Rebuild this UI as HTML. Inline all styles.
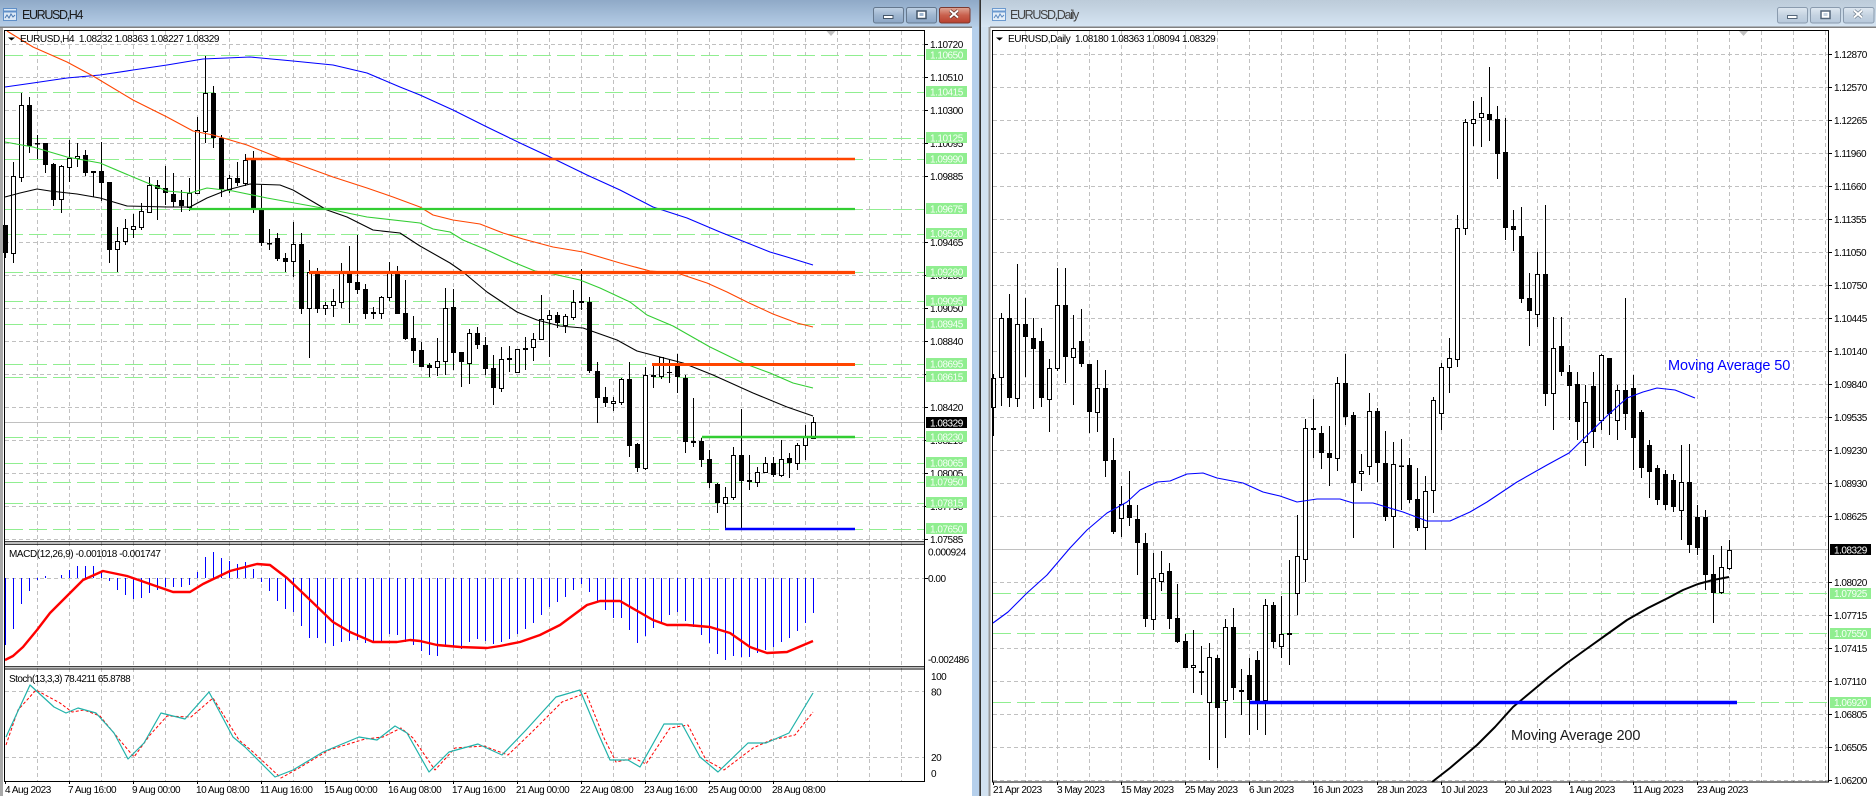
<!DOCTYPE html>
<html><head><meta charset="utf-8"><title>EURUSD</title>
<style>
html,body{margin:0;padding:0;background:#fff;width:1876px;height:796px;overflow:hidden}
svg{position:absolute;left:0;top:0;display:block}
text{font-family:"Liberation Sans",sans-serif;font-size:10px;letter-spacing:-.48px;fill:#000}
.hd{letter-spacing:-.41px}
.t{font-size:12.5px;letter-spacing:-1.35px;fill:#1a1a1a}
.g{fill:#f6fff6}
.grid{stroke:#c0c0c0;stroke-width:1;stroke-dasharray:4 3;fill:none}
.lv{stroke:#90ee90;stroke-width:1;stroke-dasharray:18 6;fill:none}
.w{stroke:#000;stroke-width:1;fill:none}
.f{stroke:#000;stroke-width:5;fill:none}
.h{stroke:#000;stroke-width:1;fill:#fff}
.m{fill:none;stroke-width:1.1;stroke-linejoin:round}
</style></head><body>
<svg width="1876" height="796" viewBox="0 0 1876 796" xmlns="http://www.w3.org/2000/svg">
<defs>
<linearGradient id="ta" x1="0" y1="0" x2="0" y2="1"><stop offset="0" stop-color="#8fa9c7"/><stop offset="1" stop-color="#b6cee7"/></linearGradient>
<linearGradient id="tb" x1="0" y1="0" x2="0" y2="1"><stop offset="0" stop-color="#bccbd9"/><stop offset="1" stop-color="#d6e5f3"/></linearGradient>
<linearGradient id="ba" x1="0" y1="0" x2="0" y2="1"><stop offset="0" stop-color="#c2d3e6"/><stop offset=".5" stop-color="#9fb6d0"/><stop offset="1" stop-color="#8ba6c6"/></linearGradient>
<linearGradient id="bb" x1="0" y1="0" x2="0" y2="1"><stop offset="0" stop-color="#dfe8f1"/><stop offset=".5" stop-color="#c5d3e1"/><stop offset="1" stop-color="#b6c8db"/></linearGradient>
<linearGradient id="bc" x1="0" y1="0" x2="0" y2="1"><stop offset="0" stop-color="#dfa898"/><stop offset=".5" stop-color="#c9604d"/><stop offset="1" stop-color="#b8402e"/></linearGradient>
</defs>

<!-- window chrome -->
<rect x="0" y="0" width="980" height="796" fill="#fff"/>
<rect x="0" y="0" width="979" height="27" fill="url(#ta)"/>
<rect x="0" y="27" width="3" height="769" fill="#a8a8a8"/>
<rect x="972" y="27" width="7" height="769" fill="#b6d0ec"/>
<rect x="0" y="26.5" width="972" height="1.5" fill="#808080"/>
<rect x="979.4" y="0" width="1.4" height="796" fill="#000"/>
<rect x="981" y="0" width="895" height="27" fill="url(#tb)"/>
<rect x="981" y="27" width="8" height="769" fill="#d2e2f1"/>
<rect x="988.5" y="27" width="2" height="769" fill="#9a9a9a"/>
<rect x="990" y="26.5" width="886" height="1.5" fill="#808080"/>

<!-- title icons -->
<g fill="none">
<rect x="3.5" y="8.5" width="13" height="12" fill="#dbe8f6" stroke="#5f8fc8"/><path d="M3.5 11.5h13" stroke="#5f8fc8" stroke-width="2"/><path d="M5 18l2-3 2 3 2-4 2 3 2-2" stroke="#4a78b0"/>
<rect x="992.5" y="8.5" width="13" height="12" fill="#e4eef8" stroke="#6c9acf"/><path d="M992.5 11.5h13" stroke="#6c9acf" stroke-width="2"/><path d="M994 18l2-3 2 3 2-4 2 3 2-2" stroke="#5a88bf"/>
</g>
<text class="t" x="22" y="19">EURUSD,H4</text>
<text class="t" x="1010" y="19" style="fill:#444">EURUSD,Daily</text>

<!-- buttons -->
<rect x="873.5" y="7.5" width="30" height="15.5" rx="2" fill="url(#ba)" stroke="#65788e"/>
<rect x="883.5" y="15.5" width="9.5" height="3" fill="#fff" stroke="#44566a"/>
<rect x="906.5" y="7.5" width="30" height="15.5" rx="2" fill="url(#ba)" stroke="#65788e"/>
<rect x="917" y="11" width="9" height="7.5" fill="#fff" stroke="#44566a" stroke-width="1.5"/><rect x="919.5" y="13" width="4" height="3" fill="#9fb6d0"/>
<rect x="939.5" y="7.5" width="30.5" height="15.5" rx="2" fill="url(#bc)" stroke="#7c3a30"/>
<path d="M950 10.5l8 7M958 10.5l-8 7" stroke="#5a2a24" stroke-width="3.4"/><path d="M950 10.5l8 7M958 10.5l-8 7" stroke="#fff" stroke-width="2"/>
<rect x="1777.5" y="7.5" width="30" height="15.5" rx="2" fill="url(#bb)" stroke="#8a9bae"/>
<rect x="1787.5" y="15.5" width="9.5" height="3" fill="#fff" stroke="#55677b"/>
<rect x="1810.5" y="7.5" width="30" height="15.5" rx="2" fill="url(#bb)" stroke="#8a9bae"/>
<rect x="1821" y="11" width="9" height="7.5" fill="#fff" stroke="#55677b" stroke-width="1.5"/><rect x="1823.5" y="13" width="4" height="3" fill="#c5d3e1"/>
<rect x="1843.5" y="7.5" width="30.5" height="15.5" rx="2" fill="url(#bb)" stroke="#8a9bae"/>
<path d="M1854 10.5l8 7M1862 10.5l-8 7" stroke="#6b7a8a" stroke-width="3.4"/><path d="M1854 10.5l8 7M1862 10.5l-8 7" stroke="#fff" stroke-width="2"/>

<!-- ================= H4 CHART ================= -->
<path class="grid" d="M5 44.5H924M5 77.5H924M5 110.5H924M5 143.5H924M5 176.5H924M5 209.5H924M5 242.5H924M5 275.5H924M5 308.5H924M5 341.5H924M5 374.5H924M5 407.5H924M5 440.5H924M5 473.5H924M5 506.5H924M5 539.5H924"/>
<path class="grid" d="M37.5 31V781M69.5 31V781M101.5 31V781M133.5 31V781M165.5 31V781M197.5 31V781M229.5 31V781M261.5 31V781M293.5 31V781M325.5 31V781M357.5 31V781M389.5 31V781M421.5 31V781M453.5 31V781M485.5 31V781M517.5 31V781M549.5 31V781M581.5 31V781M613.5 31V781M645.5 31V781M677.5 31V781M709.5 31V781M741.5 31V781M773.5 31V781M805.5 31V781M837.5 31V781M869.5 31V781M901.5 31V781"/>
<path d="M5 422.5H924" stroke="#c0c0c0"/>
<path class="lv" d="M5 55.5H924M5 92.5H924M5 138.5H924M5 159.5H924M5 209.5H924M5 234.5H924M5 272.5H924M5 301.5H924M5 324.5H924M5 364.5H924M5 377.5H924M5 437.5H924M5 463.5H924M5 482.5H924M5 503.5H924M5 529.5H924"/>

<path class="w" d="M5.5 225V258M13.5 162V263M21.5 93V182M29.5 97V153M37.5 135V159M45.5 143V173M53.5 163V206M61.5 165V213M69.5 140V182M77.5 143V167M85.5 150V176M93.5 171V197M101.5 142V201M109.5 182V263M117.5 227V272M125.5 219V245M133.5 214V238M141.5 203V230M149.5 177V212M157.5 180V220M165.5 166V205M173.5 173V207M181.5 190V212M189.5 178V211M197.5 117V193M205.5 56V143M213.5 86V148M221.5 135V197M229.5 175V193M237.5 162V186M245.5 154V186M253.5 151V213M261.5 185V246M269.5 229V250M277.5 233V261M285.5 253V272M293.5 222V277M301.5 233V314M309.5 260V358M317.5 268V313M325.5 302V315M333.5 289V317M341.5 263V308M349.5 246V323M357.5 235V294M365.5 284V319M373.5 307V319M381.5 296V319M389.5 262V301M397.5 266V314M405.5 280V340M413.5 316V363M421.5 342V367M429.5 363V377M437.5 338V376M445.5 288V375M453.5 289V370M461.5 352V387M469.5 329V384M477.5 327V349M485.5 337V375M493.5 355V405M501.5 347V392M509.5 346V372M517.5 349V373M525.5 337V370M533.5 333V361M541.5 295V339M549.5 310V357M557.5 312V328M565.5 314V333M573.5 290V320M581.5 269V310M589.5 297V373M597.5 362V423M605.5 387V407M613.5 397V411M621.5 378V405M629.5 362V457M637.5 443V472M645.5 367V470M653.5 365V388M661.5 357V379M669.5 360V383M677.5 354V393M685.5 375V453M693.5 398V447M701.5 438V467M709.5 450V488M717.5 483V513M725.5 487V529M733.5 447V500M741.5 409V529M749.5 455V490M757.5 467V487M765.5 457V472M773.5 457V477M781.5 440V477M789.5 453V478M797.5 443V470M805.5 425V460M813.5 417V439"/>
<path class="h" d="M11.5 176.5h4V253.5h-4zM19.5 105.5h4V177.5h-4zM59.5 166.5h4V199.5h-4zM67.5 158.5h4V167.5h-4zM75.5 156.5h4V158.5h-4zM115.5 241.5h4V249.5h-4zM123.5 228.5h4V241.5h-4zM131.5 226.5h4V229.5h-4zM139.5 211.5h4V227.5h-4zM147.5 185.5h4V212.5h-4zM187.5 193.5h4V207.5h-4zM195.5 130.5h4V193.5h-4zM203.5 93.5h4V131.5h-4zM227.5 178.5h4V189.5h-4zM243.5 160.5h4V183.5h-4zM291.5 244.5h4V261.5h-4zM307.5 272.5h4V308.5h-4zM323.5 305.5h4V308.5h-4zM331.5 301.5h4V305.5h-4zM339.5 273.5h4V302.5h-4zM379.5 297.5h4V313.5h-4zM387.5 272.5h4V297.5h-4zM435.5 361.5h4V367.5h-4zM443.5 308.5h4V361.5h-4zM467.5 333.5h4V363.5h-4zM499.5 359.5h4V388.5h-4zM515.5 349.5h4V372.5h-4zM523.5 348.5h4V349.5h-4zM531.5 339.5h4V347.5h-4zM539.5 319.5h4V339.5h-4zM547.5 315.5h4V319.5h-4zM563.5 316.5h4V325.5h-4zM571.5 302.5h4V317.5h-4zM611.5 401.5h4V403.5h-4zM619.5 379.5h4V402.5h-4zM643.5 375.5h4V468.5h-4zM659.5 357.5h4V376.5h-4zM723.5 497.5h4V503.5h-4zM731.5 455.5h4V497.5h-4zM755.5 472.5h4V482.5h-4zM763.5 463.5h4V472.5h-4zM779.5 459.5h4V475.5h-4zM795.5 445.5h4V463.5h-4zM803.5 437.5h4V445.5h-4zM811.5 422.5h4V438.5h-4z"/>
<path class="f" d="M5.5 225V253M29.5 105V146M37.5 143V144.5M45.5 143V165M53.5 164V200M85.5 155V173M93.5 171V173M101.5 171V183M109.5 182V250M157.5 185V189M165.5 188V193M173.5 194V202M181.5 200V206M213.5 93V138M221.5 138V189M237.5 178V183M253.5 158V208M261.5 209V243M269.5 243V244.5M277.5 238V259M285.5 258V262M301.5 244V309M317.5 272V309M349.5 273V283M357.5 282V290M365.5 289V314M373.5 312V314M397.5 272V314M405.5 313V339M413.5 338V351M421.5 350V367M429.5 365V368M453.5 307V353M461.5 352V362M477.5 333V345M485.5 345V369M493.5 368V388M509.5 358V360M557.5 315V323M581.5 301V303M589.5 302V371M597.5 371V398M605.5 397V403M629.5 379V446M637.5 444V468M653.5 375V377M669.5 372V373M677.5 363V377M685.5 378V442M693.5 441V443M701.5 441V460M709.5 459V483M717.5 484V503M741.5 455V481M749.5 480V482M773.5 463V475M789.5 458V463"/>

<polyline class="m" stroke="#0000ff" points="5,87 33,83 67,78 100,75 133,70 167,65 203,59 250,57 293,61 333,65 367,73 400,87 420,95 453,110 487,127 520,143 550,157 587,175 620,190 653,207 687,218 720,232 740,240 770,252 787,257 813,265"/>
<polyline class="m" stroke="#ff4500" points="7,31 33,47 67,62 93,76 133,100 167,117 193,131 213,135 247,145 277,157 300,165 333,177 367,188 393,197 420,207 433,215 453,220 480,224 503,233 523,239 553,247 583,252 620,263 650,271 677,273 707,283 727,292 747,302 773,314 797,323 813,327"/>
<polyline class="m" stroke="#32cd32" points="5,142 33,147 67,157 100,163 133,177 167,191 190,193 207,188 233,191 267,198 300,204 333,210 367,217 420,223 433,229 450,232 463,240 487,250 513,262 535,271 553,274 580,280 600,288 630,302 647,315 673,326 710,347 743,363 770,373 793,383 813,388"/>
<polyline class="m" stroke="#000" points="5,197 20,193 37,189 50,191 77,194 100,198 127,206 167,207 190,207 207,198 227,190 250,184 280,185 293,190 327,210 347,217 373,230 400,233 420,246 450,263 463,272 487,292 517,312 537,320 560,326 583,328 617,340 637,351 683,363 713,375 753,393 787,407 813,416"/>

<path d="M246 159H855" stroke="#ff4500" stroke-width="2.6"/>
<path d="M309 272.5H855" stroke="#ff4500" stroke-width="3.2"/>
<path d="M652 364.5H855" stroke="#ff4500" stroke-width="3"/>
<path d="M189 209H855" stroke="#32cd32" stroke-width="2.2"/>
<path d="M702 437H855" stroke="#32cd32" stroke-width="2.6"/>
<path d="M725 529H855" stroke="#0000ff" stroke-width="2.4"/>

<!-- MACD -->
<path class="grid" d="M5 578.5H924"/>
<path d="M5.5 578V645M13.5 578V629M21.5 578V604M29.5 578V591M37.5 578V580M45.5 578V576M61.5 578V575M69.5 578V570M77.5 578V566M85.5 578V566M93.5 578V566M101.5 578V572M109.5 578V581M117.5 578V590M125.5 578V595M133.5 578V599M141.5 578V598M149.5 578V593M157.5 578V590M165.5 578V587M173.5 578V587M181.5 578V587M189.5 578V585M197.5 578V572M205.5 578V557M213.5 578V552M221.5 578V558M229.5 578V561M237.5 578V564M245.5 578V562M253.5 578V569M261.5 578V582M269.5 578V591M277.5 578V601M285.5 578V609M293.5 578V612M301.5 578V626M309.5 578V638M317.5 578V638M325.5 578V643M333.5 578V646M341.5 578V642M349.5 578V641M357.5 578V640M365.5 578V643M373.5 578V643M381.5 578V643M389.5 578V634M397.5 578V635M405.5 578V642M413.5 578V645M421.5 578V651M429.5 578V655M437.5 578V656M445.5 578V647M453.5 578V647M461.5 578V649M469.5 578V642M477.5 578V639M485.5 578V641M493.5 578V644M501.5 578V642M509.5 578V639M517.5 578V634M525.5 578V629M533.5 578V623M541.5 578V615M549.5 578V607M557.5 578V602M565.5 578V597M573.5 578V590M581.5 578V584M589.5 578V592M597.5 578V602M605.5 578V610M613.5 578V618M621.5 578V618M629.5 578V630M637.5 578V643M645.5 578V636M653.5 578V628M661.5 578V623M669.5 578V615M677.5 578V612M685.5 578V621M693.5 578V627M701.5 578V635M709.5 578V643M717.5 578V654M725.5 578V660M733.5 578V656M741.5 578V657M749.5 578V657M757.5 578V653M765.5 578V650M773.5 578V647M781.5 578V642M789.5 578V638M797.5 578V631M805.5 578V623M813.5 578V613" stroke="#0000ff" fill="none"/>
<polyline fill="none" stroke="#ff0000" stroke-width="2.4" stroke-linejoin="round" points="5,660 13,656 23,647 37,630 50,613 70,593 83,580 103,571 127,576 150,584 173,592 190,592 203,584 230,571 257,564 270,565 287,578 307,597 333,622 350,632 373,642 397,642 410,640 420,641 437,645 460,647 487,648 500,646 520,642 540,635 560,625 587,605 600,601 620,601 653,620 667,625 687,625 710,627 730,633 750,647 767,653 787,652 813,641"/>

<!-- Stochastic -->
<path class="grid" d="M5 691.5H924M5 757.5H924"/>
<polyline fill="none" stroke="#ff0000" stroke-width="1" stroke-dasharray="3 2" stroke-linejoin="round" points="6,745 18,710 36,690 60,703 72,712 84,710 100,716 118,738 134,757 150,735 167,716 191,717 213,698 239,740 253,752 281,778 299,768 329,750 365,739 383,737 401,728 413,738 435,770 455,748 484,746 508,755 532,732 562,702 586,693 604,738 616,762 634,758 646,764 670,728 688,725 706,760 724,770 753,748 771,740 795,735 813,712"/>
<polyline fill="none" stroke="#20b2aa" stroke-width="1.2" stroke-linejoin="round" points="6,737 30,685 54,707 66,713 78,708 96,713 114,733 128,759 144,743 161,713 185,719 209,692 233,737 245,747 275,777 293,770 323,752 359,737 377,740 395,726 407,733 429,772 449,752 478,744 502,755 526,730 556,697 580,690 598,733 610,760 628,760 640,767 664,724 682,724 700,757 718,772 748,743 766,743 789,733 813,693"/>

<!-- frames H4 -->
<rect x="4.5" y="30.5" width="920" height="751" fill="none" stroke="#000"/>
<path d="M4 541.8H925M4 544.3H925M4 666.7H925M4 669H925" stroke="#000" fill="none"/>
<path d="M826.5 31h9l-4.5 5z" fill="#c0c0c0"/>
<path d="M8 37.5h7l-3.5 3z" fill="#000"/>
<text class="hd" x="20" y="42">EURUSD,H4&#160;&#160;1.08232 1.08363 1.08227 1.08329</text>
<text class="hd" x="9" y="557">MACD(12,26,9) -0.001018 -0.001747</text>
<text x="9" y="682" style="letter-spacing:-.55px">Stoch(13,3,3) 78.4211 65.8788</text>

<!-- H4 axis -->
<path d="M925 44.5h3M925 77.5h3M925 110.5h3M925 143.5h3M925 176.5h3M925 242.5h3M925 275.5h3M925 308.5h3M925 341.5h3M925 374.5h3M925 407.5h3M925 440.5h3M925 473.5h3M925 506.5h3M925 539.5h3M925 578.5h3" stroke="#000"/>
<text x="930" y="48">1.10720</text><text x="930" y="81">1.10510</text><text x="930" y="114">1.10300</text><text x="930" y="147">1.10095</text><text x="930" y="180">1.09885</text><text x="930" y="246">1.09465</text><text x="930" y="279">1.09255</text><text x="930" y="312">1.09050</text><text x="930" y="345">1.08840</text><text x="930" y="411">1.08420</text><text x="930" y="444">1.08210</text><text x="930" y="477">1.08005</text><text x="930" y="510">1.07795</text><text x="930" y="543">1.07585</text>
<g fill="#90ee90"><rect x="926" y="49" width="41" height="11"/><rect x="926" y="86" width="41" height="11"/><rect x="926" y="132" width="41" height="11"/><rect x="926" y="153" width="41" height="11"/><rect x="926" y="203" width="41" height="11"/><rect x="926" y="228" width="41" height="11"/><rect x="926" y="266" width="41" height="11"/><rect x="926" y="295" width="41" height="11"/><rect x="926" y="318" width="41" height="11"/><rect x="926" y="358" width="41" height="11"/><rect x="926" y="371" width="41" height="11"/><rect x="926" y="431" width="41" height="11"/><rect x="926" y="457" width="41" height="11"/><rect x="926" y="476" width="41" height="11"/><rect x="926" y="497" width="41" height="11"/><rect x="926" y="523" width="41" height="11"/></g>
<rect x="926" y="417" width="41" height="11" fill="#000"/>
<g class="g"><text class="g" x="930" y="58.5">1.10650</text><text class="g" x="930" y="95.5">1.10415</text><text class="g" x="930" y="141.5">1.10125</text><text class="g" x="930" y="162.5">1.09990</text><text class="g" x="930" y="212.5">1.09675</text><text class="g" x="930" y="237">1.09520</text><text class="g" x="930" y="275.5">1.09280</text><text class="g" x="930" y="304.5">1.09095</text><text class="g" x="930" y="327.5">1.08945</text><text class="g" x="930" y="367.5">1.08695</text><text class="g" x="930" y="380.5">1.08615</text><text class="g" x="930" y="440.5">1.08230</text><text class="g" x="930" y="466.5">1.08065</text><text class="g" x="930" y="485.5">1.07950</text><text class="g" x="930" y="506.5">1.07815</text><text class="g" x="930" y="532.5">1.07650</text></g>
<text x="930" y="426.5" style="fill:#fff">1.08329</text>
<text x="928" y="555.5">0.000924</text><text x="928" y="582">0.00</text><text x="928" y="663">-0.002486</text>
<text x="931" y="680">100</text><text x="931" y="695.5">80</text><text x="931" y="761">20</text><text x="931" y="777">0</text>

<!-- H4 dates -->
<path d="M5.5 781v3M69.5 781v3M133.5 781v3M197.5 781v3M261.5 781v3M325.5 781v3M389.5 781v3M453.5 781v3M517.5 781v3M581.5 781v3M645.5 781v3M709.5 781v3M773.5 781v3" stroke="#000"/>
<text x="5" y="793">4 Aug 2023</text><text x="68" y="793">7 Aug 16:00</text><text x="132" y="793">9 Aug 00:00</text><text x="196" y="793">10 Aug 08:00</text><text x="260" y="793">11 Aug 16:00</text><text x="324" y="793">15 Aug 00:00</text><text x="388" y="793">16 Aug 08:00</text><text x="452" y="793">17 Aug 16:00</text><text x="516" y="793">21 Aug 00:00</text><text x="580" y="793">22 Aug 08:00</text><text x="644" y="793">23 Aug 16:00</text><text x="708" y="793">25 Aug 00:00</text><text x="772" y="793">28 Aug 08:00</text>

<!-- ================= DAILY CHART ================= -->
<path class="grid" d="M993 54.5H1828M993 87.5H1828M993 120.5H1828M993 153.5H1828M993 186.5H1828M993 219.5H1828M993 252.5H1828M993 285.5H1828M993 318.5H1828M993 351.5H1828M993 384.5H1828M993 417.5H1828M993 450.5H1828M993 483.5H1828M993 516.5H1828M993 582.5H1828M993 615.5H1828M993 648.5H1828M993 681.5H1828M993 714.5H1828M993 747.5H1828M993 780.5H1828"/>
<path class="grid" d="M1025.5 31V782M1057.5 31V782M1089.5 31V782M1121.5 31V782M1153.5 31V782M1185.5 31V782M1217.5 31V782M1249.5 31V782M1281.5 31V782M1313.5 31V782M1345.5 31V782M1377.5 31V782M1409.5 31V782M1441.5 31V782M1473.5 31V782M1505.5 31V782M1537.5 31V782M1569.5 31V782M1601.5 31V782M1633.5 31V782M1665.5 31V782M1697.5 31V782M1729.5 31V782M1761.5 31V782M1793.5 31V782M1825.5 31V782"/>
<path d="M993 549.5H1828" stroke="#c0c0c0"/>
<path class="lv" d="M993 593.5H1828M993 633.5H1828M993 702.5H1828"/>

<path class="w" d="M993.5 374V436M1001.5 313V406M1009.5 294V407M1017.5 264V407M1025.5 298V377M1033.5 318V409M1041.5 328V407M1049.5 359V432M1057.5 268V371M1065.5 268V383M1073.5 315V405M1081.5 309V367M1089.5 364V433M1097.5 360V432M1105.5 370V477M1113.5 438V534M1121.5 486V537M1129.5 471V526M1137.5 505V575M1145.5 533V627M1153.5 553V630M1161.5 551V591M1169.5 563V629M1177.5 584V643M1185.5 634V668M1193.5 630V693M1201.5 646V695M1209.5 643V760M1217.5 655V768M1225.5 619V738M1233.5 608V700M1241.5 669V715M1249.5 658V735M1257.5 651V730M1265.5 599V735M1273.5 602V648M1281.5 596V658M1289.5 560V665M1297.5 515V615M1305.5 419V582M1313.5 399V458M1321.5 426V469M1329.5 426V486M1337.5 377V471M1345.5 354V425M1353.5 412V538M1361.5 454V491M1369.5 393V475M1377.5 408V482M1385.5 431V521M1393.5 442V548M1401.5 439V510M1409.5 458V503M1417.5 468V531M1425.5 476V550M1433.5 397V513M1441.5 363V430M1449.5 338V393M1457.5 215V367M1465.5 119V235M1473.5 101V146M1481.5 97V147M1489.5 67V141M1497.5 106V179M1505.5 118V240M1513.5 210V251M1521.5 207V303M1529.5 273V346M1537.5 252V327M1545.5 205V406M1553.5 317V430M1561.5 317V376M1569.5 365V420M1577.5 372V440M1585.5 385V466M1593.5 372V448M1601.5 354V430M1609.5 358V435M1617.5 385V440M1625.5 298V430M1633.5 375V470M1641.5 410V478M1649.5 440V498M1657.5 465V505M1665.5 470V510M1673.5 474V512M1681.5 445V540M1689.5 444V553M1697.5 505V555M1705.5 510V590M1713.5 555V623M1721.5 546V594M1729.5 540V570"/>
<path class="h" d="M991.5 378.5h4V407.5h-4zM999.5 318.5h4V377.5h-4zM1015.5 324.5h4V398.5h-4zM1047.5 368.5h4V399.5h-4zM1055.5 305.5h4V368.5h-4zM1071.5 348.5h4V357.5h-4zM1095.5 388.5h4V412.5h-4zM1119.5 504.5h4V518.5h-4zM1151.5 578.5h4V619.5h-4zM1159.5 573.5h4V581.5h-4zM1191.5 665.5h4V667.5h-4zM1207.5 657.5h4V702.5h-4zM1223.5 627.5h4V700.5h-4zM1263.5 605.5h4V700.5h-4zM1279.5 634.5h4V646.5h-4zM1295.5 556.5h4V593.5h-4zM1303.5 428.5h4V559.5h-4zM1335.5 383.5h4V458.5h-4zM1359.5 471.5h4V473.5h-4zM1367.5 411.5h4V466.5h-4zM1391.5 464.5h4V516.5h-4zM1423.5 491.5h4V527.5h-4zM1431.5 400.5h4V490.5h-4zM1439.5 367.5h4V413.5h-4zM1447.5 358.5h4V367.5h-4zM1455.5 228.5h4V359.5h-4zM1463.5 122.5h4V228.5h-4zM1471.5 119.5h4V123.5h-4zM1479.5 113.5h4V117.5h-4zM1535.5 274.5h4V314.5h-4zM1551.5 348.5h4V393.5h-4zM1583.5 402.5h4V442.5h-4zM1599.5 355.5h4V420.5h-4zM1615.5 390.5h4V420.5h-4zM1679.5 482.5h4V510.5h-4zM1719.5 567.5h4V592.5h-4zM1727.5 550.5h4V568.5h-4z"/>
<path class="f" d="M1009.5 318V398M1025.5 324V337M1033.5 338V349M1041.5 341V398M1065.5 305V357M1081.5 341V364M1089.5 364V412M1105.5 388V461M1113.5 460V532M1129.5 505V518M1137.5 519V543M1145.5 543V619M1169.5 571V619M1177.5 618V642M1185.5 641V668M1201.5 671V673M1217.5 658V708M1233.5 627V688M1241.5 690V692M1249.5 675V700M1257.5 660V702M1273.5 605V642M1289.5 633V635M1313.5 428V430M1321.5 433V453M1329.5 453V458M1345.5 383V417M1353.5 415V483M1377.5 411V463M1385.5 463V517M1401.5 465.5V467M1409.5 465V500M1417.5 499V528M1489.5 114V120M1497.5 119V154M1505.5 152V228M1513.5 226V230M1521.5 236V299M1529.5 298V311M1545.5 274V394M1561.5 346V372M1569.5 372V386M1577.5 384V422M1593.5 386V432M1609.5 358V414M1625.5 390V414M1633.5 388V438M1641.5 412V468M1649.5 445V472M1657.5 468V500M1665.5 474V505M1673.5 480V507M1689.5 482V545M1697.5 517V548M1705.5 517V575M1713.5 574V593"/>

<polyline class="m" stroke="#0000ff" stroke-width="1.2" points="993,623 1008,612 1027,593 1047,575 1070,548 1087,530 1107,513 1127,502 1140,490 1157,482 1170,481 1187,474 1203,473 1217,478 1243,483 1263,492 1280,496 1297,502 1317,499 1340,499 1353,503 1373,503 1403,512 1427,521 1450,521 1470,512 1487,502 1517,482 1547,465 1569,453 1609,414 1627,398 1643,392 1657,388 1675,390 1695,398"/>
<polyline fill="none" stroke="#000" stroke-width="2" stroke-linejoin="round" points="1432,782 1450,768 1477,745 1495,727 1513,707 1531,692 1549,677 1567,663 1585,650 1606,635 1627,620 1648,608 1668,598 1683,590 1698,584 1713,580 1729,577"/>
<path d="M1250 702.5H1737" stroke="#0000ff" stroke-width="3.6"/>

<rect x="992.5" y="30.5" width="836" height="751.5" fill="none" stroke="#000"/>
<path d="M1739 31h9l-4.5 5z" fill="#c0c0c0"/>
<path d="M996 37.5h7l-3.5 3z" fill="#000"/>
<text class="hd" x="1008" y="42">EURUSD,Daily&#160;&#160;1.08180 1.08363 1.08094 1.08329</text>

<text x="1668" y="370" style="font-size:14.5px;letter-spacing:-.1px;fill:#0000ff">Moving Average 50</text>
<text x="1511" y="740" style="font-size:14.5px;letter-spacing:-.15px;fill:#1a1a1a">Moving Average 200</text>

<!-- Daily axis -->
<path d="M1829 54.5h3M1829 87.5h3M1829 120.5h3M1829 153.5h3M1829 186.5h3M1829 219.5h3M1829 252.5h3M1829 285.5h3M1829 318.5h3M1829 351.5h3M1829 384.5h3M1829 417.5h3M1829 450.5h3M1829 483.5h3M1829 516.5h3M1829 582.5h3M1829 615.5h3M1829 648.5h3M1829 681.5h3M1829 714.5h3M1829 747.5h3M1829 780.5h3" stroke="#000"/>
<text x="1834" y="58">1.12870</text><text x="1834" y="91">1.12570</text><text x="1834" y="124">1.12265</text><text x="1834" y="157">1.11960</text><text x="1834" y="190">1.11660</text><text x="1834" y="223">1.11355</text><text x="1834" y="256">1.11050</text><text x="1834" y="289">1.10750</text><text x="1834" y="322">1.10445</text><text x="1834" y="355">1.10140</text><text x="1834" y="388">1.09840</text><text x="1834" y="421">1.09535</text><text x="1834" y="454">1.09230</text><text x="1834" y="487">1.08930</text><text x="1834" y="520">1.08625</text><text x="1834" y="586">1.08020</text><text x="1834" y="619">1.07715</text><text x="1834" y="652">1.07415</text><text x="1834" y="685">1.07110</text><text x="1834" y="718">1.06805</text><text x="1834" y="751">1.06505</text><text x="1834" y="784">1.06200</text>
<rect x="1830" y="544" width="41" height="11" fill="#000"/><text x="1834" y="553.5" style="fill:#fff">1.08329</text>
<g fill="#90ee90"><rect x="1830" y="588" width="41" height="11"/><rect x="1830" y="628" width="41" height="11"/><rect x="1830" y="697" width="41" height="11"/></g>
<text class="g" x="1834" y="597">1.07925</text><text class="g" x="1834" y="637">1.07550</text><text class="g" x="1834" y="706">1.06920</text>

<!-- Daily dates -->
<path d="M993.5 782v3M1057.5 782v3M1121.5 782v3M1185.5 782v3M1249.5 782v3M1313.5 782v3M1377.5 782v3M1441.5 782v3M1505.5 782v3M1569.5 782v3M1633.5 782v3M1697.5 782v3" stroke="#000"/>
<text x="993" y="793">21 Apr 2023</text><text x="1057" y="793">3 May 2023</text><text x="1121" y="793">15 May 2023</text><text x="1185" y="793">25 May 2023</text><text x="1249" y="793">6 Jun 2023</text><text x="1313" y="793">16 Jun 2023</text><text x="1377" y="793">28 Jun 2023</text><text x="1441" y="793">10 Jul 2023</text><text x="1505" y="793">20 Jul 2023</text><text x="1569" y="793">1 Aug 2023</text><text x="1633" y="793">11 Aug 2023</text><text x="1697" y="793">23 Aug 2023</text>
</svg>
</body></html>
